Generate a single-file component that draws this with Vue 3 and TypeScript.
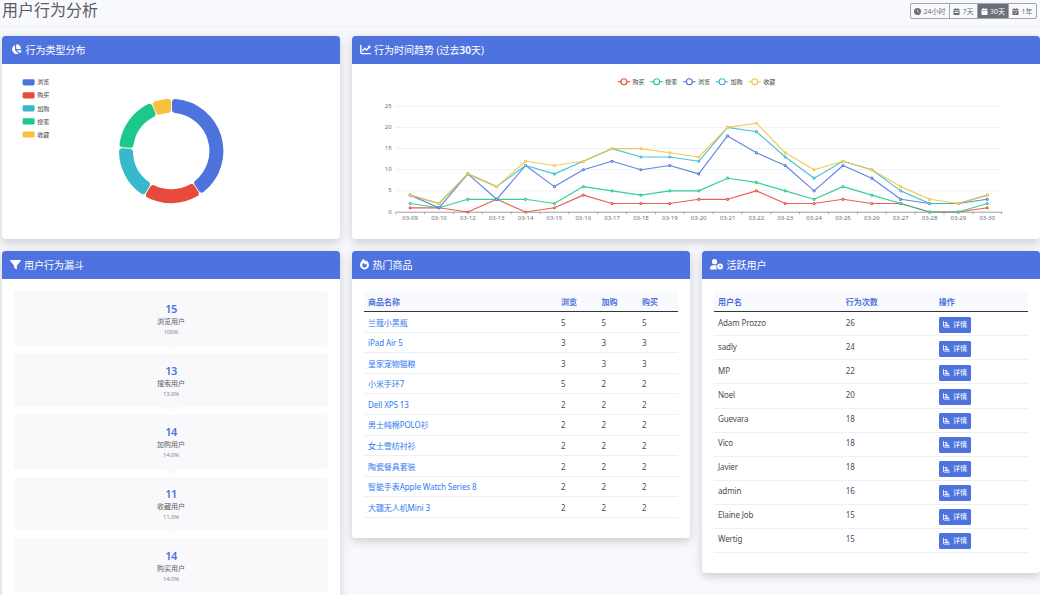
<script setup lang="ts">
interface Series { name: string; color: string; values: number[] }
interface Slice { name: string; color: string; from: number; to: number }

const slices: Slice[] = [
  { name: '浏览', color: '#4e73df', from: 0.5, to: 145.8 },
  { name: '购买', color: '#e74a3b', from: 145.8, to: 211 },
  { name: '加购', color: '#36b9cc', from: 211, to: 273.8 },
  { name: '搜索', color: '#1cc88a', from: 273.8, to: 337.8 },
  { name: '收藏', color: '#f6c23e', from: 337.8, to: 360.5 },
]

const series: Series[] = [
  { name: '购买', color: '#e74a3b', values: [1, 1, 0, 3, 0, 1, 4, 2, 2, 2, 3, 3, 5, 2, 2, 3, 2, 2, 0, 0, 1] },
  { name: '搜索', color: '#1cc88a', values: [2, 1, 3, 3, 3, 2, 6, 5, 4, 5, 5, 8, 7, 5, 3, 6, 4, 2, 0, 0, 2] },
  { name: '浏览', color: '#4e73df', values: [4, 1, 9, 3, 11, 6, 10, 12, 10, 11, 9, 18, 14, 11, 5, 11, 8, 3, 2, 2, 3] },
  { name: '加购', color: '#36b9cc', values: [4, 2, 9, 6, 11, 9, 12, 15, 13, 13, 12, 20, 19, 13, 8, 12, 10, 5, 2, 2, 4] },
  { name: '收藏', color: '#f6c23e', values: [4, 2, 9, 6, 12, 11, 12, 15, 15, 14, 13, 20, 21, 14, 10, 12, 10, 6, 3, 2, 4] },
]
const days = ['09', '10', '12', '13', '14', '15', '16', '17', '18', '19', '20', '21', '22', '23', '24', '25', '26', '27', '28', '29', '30']
const ticks = [0, 5, 10, 15, 20, 25]

const plotLeft = 43.7
const step = 606 / 21
const px = (i: number): number => plotLeft + step * (i + 0.5)
const py = (v: number): number => 148 - v * 4.228
const linePoints = (s: Series): string => s.values.map((v, i) => `${px(i).toFixed(1)},${py(v).toFixed(1)}`).join(' ')

const round = 3.4
function slicePath(s: Slice): string {
  const cx = 169.2
  const cy = 87
  const outer = 52.2 - round
  const inner = 38.2 + round
  const rad = Math.PI / 180
  const pt = (r: number, edge: number, sign: number): string => {
    const a = edge * rad + sign * Math.asin((round + 0.4) / r)
    return `${(cx + r * Math.sin(a)).toFixed(2)} ${(cy - r * Math.cos(a)).toFixed(2)}`
  }
  return `M${pt(outer, s.from, 1)}A${outer} ${outer} 0 0 1 ${pt(outer, s.to, -1)}L${pt(inner, s.to, -1)}A${inner} ${inner} 0 0 0 ${pt(inner, s.from, 1)}Z`
}

const funnel = [
  { count: 15, label: '浏览用户', rate: '100%' },
  { count: 13, label: '搜索用户', rate: '13.0%' },
  { count: 14, label: '加购用户', rate: '14.0%' },
  { count: 11, label: '收藏用户', rate: '11.0%' },
  { count: 14, label: '购买用户', rate: '14.0%' },
]

const products: [string, number, number, number][] = [
  ['兰蔻小黑瓶', 5, 5, 5],
  ['iPad Air 5', 3, 3, 3],
  ['皇家宠物猫粮', 3, 3, 3],
  ['小米手环7', 5, 2, 2],
  ['Dell XPS 13', 2, 2, 2],
  ['男士纯棉POLO衫', 2, 2, 2],
  ['女士雪纺衬衫', 2, 2, 2],
  ['陶瓷餐具套装', 2, 2, 2],
  ['智能手表Apple Watch Series 8', 2, 2, 2],
  ['大疆无人机Mini 3', 2, 2, 2],
]

const users: [string, number][] = [
  ['Adam Prozzo', 26], ['sadly', 24], ['MP', 22], ['Noel', 20], ['Guevara', 18],
  ['Vico', 18], ['Javier', 18], ['admin', 16], ['Elaine Job', 15], ['Wertig', 15],
]
</script>

<template>
  <div class="page">
    <header class="topbar">
      <h1>用户行为分析</h1>
      <div class="ranges">
        <button class="w24">
          <svg viewBox="0 0 16 16"><circle cx="8" cy="8" r="8" /><path class="cut" d="M8 3.5V8l3 2" /></svg>24小时
        </button>
        <button class="w7">
          <svg viewBox="0 0 14 16"><path d="M3 0h2v2h4V0h2v2h1.500a1.500 1.500 0 0 1 1.500 1.500V5H0V3.500A1.500 1.500 0 0 1 1.500 2H3zM0 6h14v8.500a1.500 1.500 0 0 1-1.500 1.500h-11A1.500 1.500 0 0 1 0 14.500zM2.500 8.500v3h9v-3z" fill-rule="evenodd" /></svg>7天
        </button>
        <button class="w30 active">
          <svg viewBox="0 0 14 16"><path d="M3 0h2v2h4V0h2v2h1.500a1.500 1.500 0 0 1 1.500 1.500V5H0V3.500A1.500 1.500 0 0 1 1.500 2H3zM0 6h14v8.500a1.500 1.500 0 0 1-1.500 1.500h-11A1.500 1.500 0 0 1 0 14.500z" /></svg>30天
        </button>
        <button class="w1">
          <svg viewBox="0 0 14 16"><path d="M3 0h2v2h4V0h2v2h1.500a1.500 1.500 0 0 1 1.500 1.500V5H0V3.500A1.500 1.500 0 0 1 1.500 2H3zM0 6h14v8.500a1.500 1.500 0 0 1-1.500 1.500h-11A1.500 1.500 0 0 1 0 14.500z" /><path class="cut" d="M4 10.500l2.200 2.200L10.200 9" /></svg>1年
        </button>
      </div>
    </header>

    <main>
      <div class="row top">
        <section class="card narrow">
          <div class="head">
            <svg class="i-pie" viewBox="0 0 18 16"><path d="M7.500 1.200V9l5.300 5.300A7 7 0 1 1 7.500 1.200zM9.300 0a7.200 7.200 0 0 1 7.200 7.200H9.300zM10 9h7.200a7 7 0 0 1-2.200 4.800z" /></svg>
            <h2>行为类型分布</h2>
          </div>
          <svg class="chart" width="338" height="175" viewBox="0 0 338 175">
            <g v-for="(s, i) in slices" :key="s.name">
              <rect x="20.600" :y="15.200 + i * 13.050" width="12" height="6.200" rx="1.400" :fill="s.color" />
              <text class="legend" x="35.300" :y="20.400 + i * 13.050">{{ s.name }}</text>
              <path :d="slicePath(s)" :fill="s.color" :stroke="s.color" :stroke-width="round * 2" stroke-linejoin="round" />
            </g>
          </svg>
        </section>

        <section class="card wide">
          <div class="head">
            <svg class="i-line" viewBox="0 0 16 16"><path class="stroke" d="M1.200 2v10.500c0 1 .8 1.500 1.500 1.500H15M4 9.500l3-3.200 2.600 2.300L14 4" /><path d="M10.500 2.500H15V7z" /></svg>
            <h2>行为时间趋势 (过去<b>30</b>天)</h2>
          </div>
          <svg class="chart" width="688" height="175" viewBox="0 0 688 175">
            <g v-for="(s, i) in series" :key="s.name" :transform="`translate(${265.700 + i * 32.700} 17.700)`">
              <path d="M0 0H12.500" :stroke="s.color" stroke-width="1.100" />
              <circle cx="6.250" cy="0" r="3" fill="#fff" :stroke="s.color" stroke-width="1.100" />
              <text class="legend" x="14.800" y="2">{{ s.name }}</text>
            </g>
            <g v-for="t in ticks" :key="t">
              <path v-if="t > 0" :d="`M43.700 ${py(t)}H649.700`" stroke="#e6ebf3" stroke-width=".7" />
              <text class="axis" x="39.700" :y="py(t) + 1.600" text-anchor="end">{{ t }}</text>
            </g>
            <path d="M43.700 148.200H649.700" stroke="#85878f" stroke-width=".8" />
            <path v-for="n in 22" :key="n" :d="`M${plotLeft + step * (n - 1)} 148v2.300`" stroke="#85878f" stroke-width=".7" />
            <text v-for="(d, i) in days" :key="d" class="axis" :x="px(i)" y="156.300" text-anchor="middle">03-{{ d }}</text>
            <g v-for="s in series" :key="s.name">
              <polyline :points="linePoints(s)" fill="none" :stroke="s.color" stroke-opacity=".88" stroke-width="1.150" stroke-linejoin="round" />
              <circle v-for="(v, i) in s.values" :key="i" :cx="px(i)" :cy="py(v)" r="1.050" fill="#fff" :stroke="s.color" stroke-width="1.050" />
            </g>
          </svg>
        </section>
      </div>

      <div class="row bottom">
        <section class="card narrow">
          <div class="head">
            <svg class="i-filter" viewBox="0 0 16 16"><path d="M1 1.500h14c.9 0 1.200.9.700 1.500L10 9.300V14c0 .8-.7 1-1.300.6L6.500 13c-.4-.3-.5-.6-.5-1V9.300L.3 3C-.2 2.400.1 1.500 1 1.500z" /></svg>
            <h2>用户行为漏斗</h2>
          </div>
          <div class="funnel">
            <div v-for="f in funnel" :key="f.label" class="stage">
              <strong>{{ f.count }}</strong>
              <span class="name">{{ f.label }}</span>
              <span class="rate">{{ f.rate }}</span>
            </div>
          </div>
        </section>

        <section class="card narrow">
          <div class="head">
            <svg class="i-fire" viewBox="0 0 14 16"><path d="M5 0c1.500 1.100 2.700 2.300 3.800 3.700.5-.7 1-1.200 1.500-1.700C12.500 4 14 7 14 9.200a7 6.800 0 0 1-14 0C0 6 2.200 3 5 0zM7.200 13c2 0 3.400-1.300 3.400-3.100 0-1.200-.5-2.100-1.100-2.900L7.900 8.800 5.400 5.600C4.200 7.200 3.500 8.300 3.500 9.800c0 2 1.500 3.200 3.700 3.200z" fill-rule="evenodd" /></svg>
            <h2>热门商品</h2>
          </div>
          <div class="table products">
            <div class="tr th"><span>商品名称</span><span>浏览</span><span>加购</span><span>购买</span></div>
            <div v-for="p in products" :key="p[0]" class="tr">
              <a>{{ p[0] }}</a><span>{{ p[1] }}</span><span>{{ p[2] }}</span><span>{{ p[3] }}</span>
            </div>
          </div>
        </section>

        <section class="card narrow">
          <div class="head">
            <svg class="i-user" viewBox="0 0 20 16"><circle cx="7" cy="4" r="4" /><path d="M5 9.500h4c.6 0 1.100.1 1.600.3a5.500 5.500 0 0 0 .3 6.200H1c-.6 0-1-.4-1-1a5.500 5.500 0 0 1 5-5.500z" /><circle cx="15.500" cy="11.500" r="4.500" /><path class="cut" d="M15.300 9.300v2.500h2" /></svg>
            <h2>活跃用户</h2>
          </div>
          <div class="table users">
            <div class="tr th"><span>用户名</span><span>行为次数</span><span>操作</span></div>
            <div v-for="u in users" :key="u[0]" class="tr">
              <span>{{ u[0] }}</span><span>{{ u[1] }}</span>
              <span><button>
                <svg viewBox="0 0 16 16"><path class="stroke" d="M1.200 1v11.500c0 1 .8 1.500 1.500 1.500H16" /><path d="M4 2h5v2.300H4zM4 5.500h8v2.300H4zM4 9h10v2.500H4z" /></svg>详情
              </button></span>
            </div>
          </div>
        </section>
      </div>
    </main>
  </div>
</template>

<style>
html,
body {
  margin: 0;
  overflow: hidden;
  background: #f8f9fc;
}
</style>

<style scoped>
.page {
  width: 1040px;
  height: 595px;
  overflow: hidden;
  box-sizing: border-box;
  background: #f8f9fc;
  color: #4b4d57;
  font-family: "Noto Sans", "Noto Sans CJK SC", sans-serif;
  font-size: 8px;
}

svg {
  display: block;
  flex: none;
  fill: currentColor;
}

.stroke {
  fill: none;
  stroke: currentColor;
  stroke-width: 2;
  stroke-linecap: round;
  stroke-linejoin: round;
}

.cut {
  fill: none;
  stroke: #f8f9fc;
  stroke-width: 1.500;
}

.head .cut {
  stroke: #4e73df;
}

button {
  display: flex;
  align-items: center;
  box-sizing: border-box;
  margin: 0;
  padding: 0;
  font: inherit;
  white-space: nowrap;
}

.topbar {
  display: flex;
  justify-content: space-between;
  box-sizing: border-box;
  height: 27px;
  padding: 0 3px 0 2px;
  border-bottom: 1px solid #f0f1f5;
}

h1 {
  margin: 0;
  font-size: 16px;
  font-weight: 400;
  line-height: 20px;
  color: #5a5c69;
}

.ranges {
  display: flex;
  box-sizing: border-box;
  height: 16px;
  margin-top: 3.400px;
  border: 1px solid #a2a4ab;
  border-radius: 2px;
  overflow: hidden;
}

.ranges button {
  justify-content: center;
  gap: 2px;
  border: 0;
  border-right: 1px solid #a2a4ab;
  background: transparent;
  color: #6c6e79;
  font-size: 7px;
}

.ranges button:last-child {
  border-right: 0;
}

.ranges svg {
  width: 7px;
  height: 7px;
}

.ranges .w24 { width: 39px; }
.ranges .w7 { width: 28px; }
.ranges .w30 { width: 31px; }
.ranges .w1 { width: 27px; }

.ranges .active {
  background: #6c6e78;
  color: #fff;
}

main {
  display: flex;
  flex-direction: column;
  gap: 12px;
  padding: 8.600px 0 0 2px;
}

.row {
  display: flex;
  align-items: flex-start;
  gap: 12px;
}

.card {
  flex: none;
  overflow: hidden;
  border-radius: 3.500px;
  background: #fff;
  box-shadow: 0 1px 14px rgba(58, 59, 69, 0.09), 0 4px 7px rgba(40, 42, 55, 0.13);
}

.narrow { width: 338px; }
.wide { width: 688px; }
.top .card { height: 203px; }

.head {
  display: flex;
  align-items: center;
  box-sizing: border-box;
  height: 28px;
  padding-left: 8px;
  background: #4e73df;
  color: #fff;
}

.head h2 {
  margin: 0;
  font-size: 10px;
  font-weight: 400;
  line-height: 14px;
}

.head b {
  font-weight: 600;
}

.i-pie { width: 12px; height: 11px; margin-right: 3.500px; }
.i-line { width: 11px; height: 11px; margin-right: 3px; }
.i-filter { width: 11px; height: 11px; margin-right: 3px; }
.i-fire { width: 9px; height: 10.500px; margin-right: 3.500px; }
.i-user { width: 13px; height: 10.500px; margin-right: 3.500px; }

.legend {
  font-size: 6px;
  fill: #444;
}

.axis {
  font-size: 6px;
  fill: #6e7079;
}

.funnel {
  display: flex;
  flex-direction: column;
  gap: 8px;
  height: 340px;
  padding: 12.900px 12.200px;
}

.stage {
  position: relative;
  display: flex;
  flex: none;
  flex-direction: column;
  align-items: center;
  box-sizing: border-box;
  height: 53.700px;
  padding-top: 9.500px;
  border-radius: 3px;
  background: #f9f9fb;
}

.stage:not(:last-child)::after {
  content: "";
  position: absolute;
  top: 100%;
  left: 50%;
  margin-left: -6px;
  border: 6px solid transparent;
  border-top-color: #fafafb;
  border-bottom: 0;
}

.stage strong {
  font-size: 11px;
  font-weight: 600;
  line-height: 15px;
  letter-spacing: -0.500px;
  color: #4e73df;
}

.stage .name {
  font-size: 7px;
  line-height: 12px;
  color: #5a5c69;
}

.stage .rate {
  font-size: 6px;
  line-height: 9px;
  letter-spacing: -0.200px;
  color: #858796;
}

.table {
  padding: 12.800px 12px 20.500px;
}

.tr {
  display: grid;
  box-sizing: border-box;
  padding-left: 4px;
  border-bottom: 1px solid #eceff3;
  line-height: 12px;
}

.products .tr {
  grid-template-columns: 193px 40.500px 40.500px 1fr;
  height: 20.570px;
  padding-top: 4.400px;
}

.products a {
  letter-spacing: -0.080px;
}

.users .tr {
  grid-template-columns: 127.800px 93px 1fr;
  height: 24.080px;
  padding-top: 4.400px;
}

.table .th {
  height: 20.800px;
  padding-top: 4.200px;
  border-bottom: 1.500px solid #34353d;
  background: #f9fafd;
  color: #4e73df;
  font-weight: 600;
}

.tr a {
  color: #2f7bf0;
}

.users .tr:not(.th) > span:first-child {
  letter-spacing: -0.120px;
}

.tr button {
  justify-content: center;
  gap: 3px;
  width: 32.500px;
  height: 16px;
  border: 0;
  border-radius: 1.500px;
  background: #4e73df;
  color: #fff;
  font-size: 7px;
}

.tr button svg {
  width: 7px;
  height: 7px;
}
</style>
